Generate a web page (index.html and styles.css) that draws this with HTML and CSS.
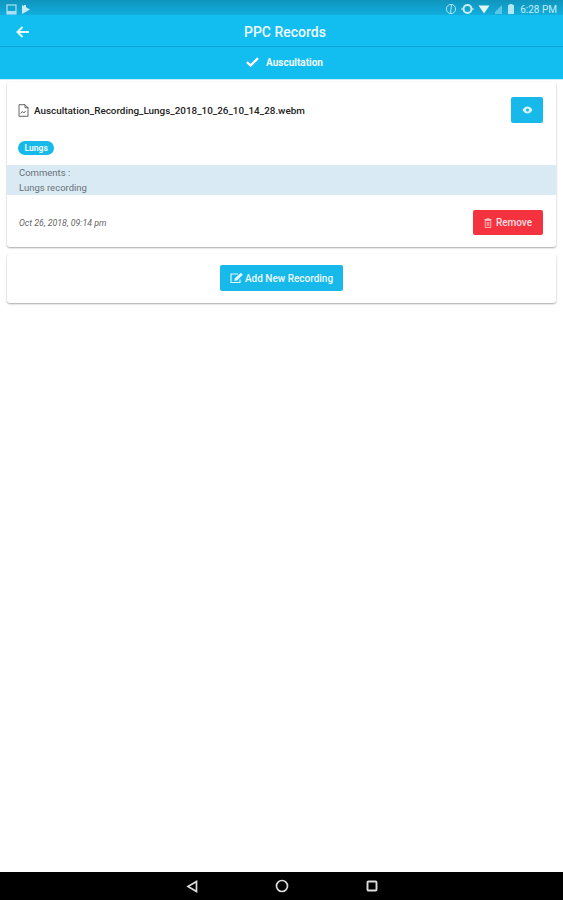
FILE: index.html
```html
<!DOCTYPE html>
<html lang="en">
<head>
<meta charset="UTF-8">
<meta name="viewport" content="width=device-width, initial-scale=1.0">
<title>PPC Records</title>
<link rel="stylesheet" href="styles.css">
</head>
<body>

<div class="status-bar">
    <div class="status-left">
        <svg width="11" height="11" viewBox="0 0 11 11"><rect x="1" y="1" width="9" height="9" fill="none" stroke="#a9e2f5" stroke-width="1.2"/><path d="M1 7h9v3H1z" fill="#a9e2f5"/></svg>
        <svg width="10" height="11" viewBox="0 0 10 11"><path d="M1 1l8 4.5L1 10z" fill="#c5ecf8"/><path d="M3 1h2v3H3z" fill="#c5ecf8"/></svg>
    </div>
    <div class="status-right">
        <svg width="12" height="12" viewBox="0 0 12 12"><circle cx="6" cy="6" r="4.6" fill="none" stroke="#b5e6f6" stroke-width="1"/><path d="M6.5 1L5.5 11" stroke="#b5e6f6"/></svg>
        <svg width="13" height="12" viewBox="0 0 13 12"><circle cx="6.5" cy="6" r="4" fill="none" stroke="#cdeff9" stroke-width="2"/><path d="M0 6h3M10 6h3" stroke="#cdeff9"/></svg>
        <svg width="12" height="10" viewBox="0 0 12 10"><path d="M0.5 1.5h11L6 9.5z" fill="#e4f6fc"/></svg>
        <svg width="9" height="11" viewBox="0 0 9 11"><path d="M1 10h7V1L1 8z" fill="#5cc6e6"/></svg>
        <svg width="8" height="12" viewBox="0 0 8 12"><path d="M2.5 1h3v1H7v9H1V2h1.5z" fill="#b5e6f6"/></svg>
        <span class="status-time">6:28 PM</span>
    </div>
</div>

<div class="app-header">
    <svg class="back-icon" width="14" height="12" viewBox="0 0 14 12"><path d="M6.5 1L1.5 6l5 5M2 6h11" fill="none" stroke="#e6f8fe" stroke-width="2"/></svg>
    <h1>PPC Records</h1>
</div>

<div class="sub-header">
    <svg width="13" height="10" viewBox="0 0 13 10"><path d="M1 5l3.5 3.5L12 1.2" fill="none" stroke="#fff" stroke-width="2.4"/></svg>
    <span>Auscultation</span>
</div>

<div class="content">
    <div class="card">
        <div class="file-row">
            <div class="file-name">
                <svg width="11" height="13" viewBox="0 0 11 13"><path d="M1 .7h6l3 3v8.600H1zM7 .7v3h3" fill="none" stroke="#555" stroke-width=".9"/><path d="M2.800 9.500l1.500-2 1.500 1.500 1.700-2" fill="none" stroke="#555" stroke-width=".9"/></svg>
                <span>Auscultation_Recording_Lungs_2018_10_26_10_14_28.webm</span>
            </div>
            <button class="btn btn-view">
                <svg width="11" height="8" viewBox="0 0 11 8"><path d="M.5 4C2 1.500 3.600.5 5.500.5S9 1.500 10.500 4C9 6.500 7.400 7.500 5.500 7.500S2 6.500.5 4z" fill="#d9f3fc"/><circle cx="5.500" cy="4" r="1.500" fill="#16b9ea"/></svg>
            </button>
        </div>
        <div class="tag-row"><span class="tag">Lungs</span></div>
        <div class="comments">
            <div>Comments :</div>
            <div>Lungs recording</div>
        </div>
        <div class="card-footer">
            <span class="date">Oct 26, 2018, 09:14 pm</span>
            <button class="btn btn-remove">
                <svg width="8" height="10" viewBox="0 0 8 10"><path d="M1.200 2.500h5.600v7H1.200zM.3 1.500h7.400M3 1.500V.5h2v1M3.200 4v4M4.800 4v4" fill="none" stroke="#fbd5d8" stroke-width=".8"/></svg>
                Remove
            </button>
        </div>
    </div>

    <div class="card card-add">
        <button class="btn btn-add">
            <svg width="14" height="12" viewBox="0 0 14 12"><path d="M10 7.500v3H1V2h7" fill="none" stroke="#e3f6fc" stroke-width="1.200"/><path d="M4.500 6.500L10.800.8l2 1.900-5.800 5.700-2.500.5z" fill="#e3f6fc"/></svg>
            Add New Recording
        </button>
    </div>
</div>

<div class="nav-bar">
    <svg width="12" height="13" viewBox="0 0 12 13"><path d="M10.500 1.500v10L2 6.500z" fill="none" stroke="#ddd" stroke-width="1.700"/></svg>
    <svg width="14" height="14" viewBox="0 0 14 14"><circle cx="7" cy="7" r="5.500" fill="none" stroke="#ddd" stroke-width="1.700"/></svg>
    <svg width="12" height="12" viewBox="0 0 12 12"><rect x="1.500" y="1.500" width="9" height="9" rx="1" fill="none" stroke="#ddd" stroke-width="1.900"/></svg>
</div>

</body>
</html>
```

FILE: styles.css
```css
* {
    box-sizing: border-box;
}
html, body {
    height: 100%;
}
body {
    margin: 0;
    display: flex;
    flex-direction: column;
    font-family: Roboto, "Liberation Sans", sans-serif;
    background-color: #fff;
    color: #333;
}
.status-bar {
    height: 15px;
    padding: 3px 6px 0 6px;
    display: flex;
    justify-content: space-between;
    align-items: center;
    background: linear-gradient(#1095bd, #11aedd);
}
.status-left {
    display: flex;
    gap: 4px;
}
.status-right {
    display: flex;
    align-items: center;
    gap: 4px;
}
.status-time {
    font-size: 10px;
    color: #c5ecf8;
    margin-left: 1px;
}
.app-header {
    height: 32px;
    padding: 2px 0 0 16px;
    display: flex;
    align-items: center;
    background-color: #12bdf0;
    border-bottom: 1px solid #0ea5d6;
}
.app-header h1 {
    margin: 0 0 0 214px;
    font-size: 14px;
    font-weight: 500;
    color: #eefaff;
}
.sub-header {
    height: 32px;
    padding: 0 0 2px 6px;
    display: flex;
    justify-content: center;
    align-items: center;
    gap: 7px;
    background-color: #12bdf0;
    color: #f2fbfe;
    font-size: 10px;
    font-weight: 700;
}
.content {
    flex: 1;
    padding: 2px 7px 0 7px;
    display: flex;
    flex-direction: column;
    gap: 7px;
    border-top: 1px solid #c5eefb;
}
.card {
    background-color: #fff;
    border-radius: 3px;
    box-shadow: 0 1px 2px rgba(0, 0, 0, 0.35);
}
.file-row {
    padding: 15px 13px 0 11px;
    height: 54px;
    display: flex;
    justify-content: space-between;
    align-items: flex-start;
}
.file-name {
    height: 26px;
    display: flex;
    align-items: center;
    gap: 5px;
    font-size: 9.900px;
    font-weight: 500;
    color: #222;
}
.btn {
    border: none;
    border-radius: 2px;
    font-family: inherit;
    color: #eefaff;
    display: flex;
    justify-content: center;
    align-items: center;
}
.btn-view {
    width: 32px;
    height: 26px;
    background-color: #16b9ea;
}
.tag-row {
    padding: 5px 0 0 11px;
    height: 29px;
    display: flex;
    align-items: flex-start;
}
.tag {
    font-size: 8.500px;
    font-weight: 700;
    line-height: 14px;
    padding: 0 6.500px;
    border-radius: 7px;
    background-color: #16b9ea;
    color: #e9f8fd;
}
.comments {
    height: 30px;
    padding: 0 12px;
    background-color: #d9eaf4;
    font-size: 9.500px;
    line-height: 15px;
    color: #6a7278;
}
.card-footer {
    padding: 15px 13px 12px 12px;
    display: flex;
    justify-content: space-between;
    align-items: center;
}
.date {
    font-size: 8.800px;
    font-style: italic;
    color: #666;
}
.btn-remove {
    width: 70px;
    height: 25px;
    gap: 4px;
    font-size: 10px;
    font-weight: 500;
    background-color: #f5333f;
    color: #fbdfe1;
}
.card-add {
    height: 49px;
    padding-bottom: 1px;
    display: flex;
    justify-content: center;
    align-items: center;
}
.btn-add {
    width: 123px;
    height: 26px;
    gap: 1px;
    font-size: 10px;
    font-weight: 500;
    background-color: #16b9ea;
}
.nav-bar {
    height: 28px;
    flex-shrink: 0;
    display: flex;
    justify-content: center;
    align-items: center;
    gap: 77px;
    background-color: #000;
}
```
